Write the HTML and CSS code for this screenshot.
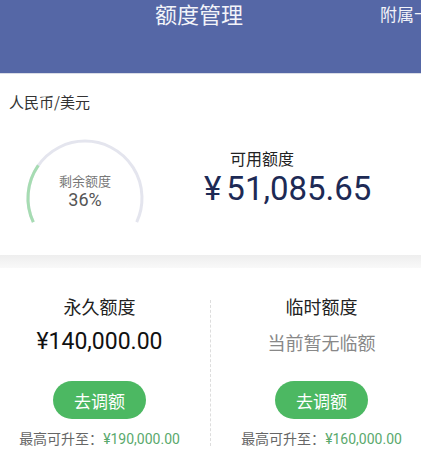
FILE: index.html
```html
<!DOCTYPE html>
<html lang="zh-CN">
<head>
    <meta charset="UTF-8">
    <meta name="viewport" content="width=device-width, initial-scale=1.0">
    <title>额度管理</title>
    <link rel="stylesheet" href="styles.css">
</head>
<body>
    <div class="header">
        <div class="header-title">额度管理</div>
        <div class="header-link">附属卡</div>
    </div>

    <div class="card-top">
        <div class="currency">人民币/美元</div>
        <div class="gauge-row">
            <div class="gauge">
                <svg width="124" height="90" viewBox="0 0 124 90">
                    <!-- arc from lower-left round the top to lower-right -->
                    <path d="M 10.3 84.1 A 57 57 0 1 1 113.7 84.1" fill="none" stroke="#e4e5ee" stroke-width="3"/>
                    <path d="M 10.3 84.1 A 57 57 0 0 1 15.3 27.3" fill="none" stroke="#a6dcb2" stroke-width="3"/>
                </svg>
                <div class="gauge-text">
                    <div class="gauge-label">剩余额度</div>
                    <div class="gauge-value">36%</div>
                </div>
            </div>
            <div class="available">
                <div class="available-label">可用额度</div>
                <div class="available-amount"><span class="yen">¥</span>51,085.65</div>
            </div>
        </div>
    </div>

    <div class="band"></div>

    <div class="limits">
        <div class="limit-col">
            <div class="limit-title">永久额度</div>
            <div class="limit-amount">¥140,000.00</div>
            <button class="btn-adjust" type="button">去调额</button>
            <div class="limit-max">最高可升至：<span class="max-num">¥190,000.00</span></div>
        </div>
        <div class="divider"></div>
        <div class="limit-col">
            <div class="limit-title">临时额度</div>
            <div class="limit-amount none">当前暂无临额</div>
            <button class="btn-adjust" type="button">去调额</button>
            <div class="limit-max">最高可升至：<span class="max-num">¥160,000.00</span></div>
        </div>
    </div>
</body>
</html>
```

FILE: styles.css
```css
body {
    margin: 0;
    width: 421px;
    height: 465px;
    overflow: hidden;
    background-color: #fff;
    font-family: "Noto Sans CJK SC", "Noto Sans", sans-serif;
    color: #222;
}

.header {
    display: flex;
    height: 73px;
    background-color: #5567a6;
    border-bottom: 1px solid #d9dce6;
    color: #f3f4f9;
    white-space: nowrap;
    overflow: hidden;
}
.header-title {
    margin-left: 155px;
    font-size: 22px;
    line-height: 26px;
}
.header-link {
    margin-left: auto;
    margin-right: -10px;
    font-size: 17px;
    line-height: 28px;
    width: 51px;
}

.card-top {
    padding: 18px 0 27px 9px;
}
.currency {
    font-size: 15px;
    line-height: 20px;
    color: #333;
}
.gauge-row {
    display: flex;
    margin-top: 26px;
    margin-left: 14px;
}
.gauge {
    display: grid;
    width: 124px;
    height: 90px;
}
.gauge svg,
.gauge-text {
    grid-area: 1 / 1;
}
.gauge-text {
    text-align: center;
    padding-top: 34px;
}
.gauge-label {
    font-size: 13px;
    line-height: 18px;
    color: #777;
}
.gauge-value {
    font-family: Roboto, "Noto Sans", sans-serif;
    font-size: 18px;
    line-height: 20px;
    color: #555;
}
.available {
    margin-left: 57px;
    padding-top: 9px;
}
.available-label {
    margin-left: 26px;
    font-size: 16px;
    line-height: 22px;
    color: #222;
}
.available-amount {
    font-family: Roboto, "Noto Sans", sans-serif;
    font-size: 33px;
    line-height: 40px;
    color: #1d2a55;
}
.available-amount .yen {
    margin-right: 5px;
}

.band {
    height: 13px;
    background: linear-gradient(#eeeeee, #f9f9f9);
}

.limits {
    display: grid;
    grid-template-columns: 199px 1px 1fr;
    column-gap: 11px;
    padding-bottom: 20px;
}
.limit-col {
    display: flex;
    flex-direction: column;
    align-items: center;
    padding-top: 26px;
}
.limit-title {
    font-size: 18px;
    line-height: 24px;
    color: #222;
}
.limit-amount {
    margin-top: 9px;
    font-family: Roboto, "Noto Sans", sans-serif;
    font-size: 23px;
    line-height: 30px;
    color: #111;
}
.limit-amount.none {
    font-family: "Noto Sans CJK SC", sans-serif;
    font-size: 18px;
    color: #888;
}
.btn-adjust {
    margin-top: 24px;
    width: 93px;
    height: 38px;
    border: none;
    border-radius: 19px;
    background-color: #4cb862;
    color: #fff;
    font-family: "Noto Sans CJK SC", sans-serif;
    font-size: 17px;
}
.limit-max {
    margin-top: 10px;
    font-size: 14px;
    line-height: 18px;
    color: #666;
    white-space: nowrap;
}
.max-num {
    font-family: Roboto, "Noto Sans", sans-serif;
    color: #5aa96d;
}
.divider {
    margin-top: 32px;
    margin-bottom: 2px;
    border-left: 1px dashed #dddddd;
}
```
